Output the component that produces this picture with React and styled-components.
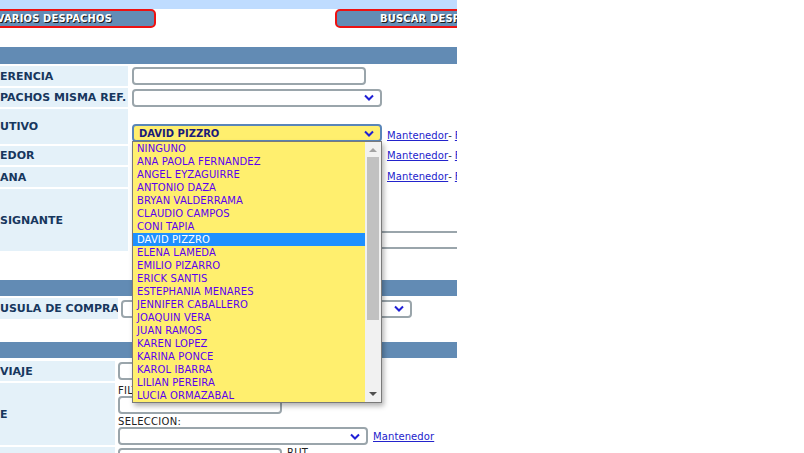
import React from "react";
import styled, { createGlobalStyle } from "styled-components";

const GlobalStyle = createGlobalStyle`
  body {
    margin: 0;
    background: #fff;
    font-family: "DejaVu Sans", Verdana, sans-serif;
  }
`;

const EJECUTIVOS = [
  "NINGUNO",
  "ANA PAOLA FERNANDEZ",
  "ANGEL EYZAGUIRRE",
  "ANTONIO DAZA",
  "BRYAN VALDERRAMA",
  "CLAUDIO CAMPOS",
  "CONI TAPIA",
  "DAVID PIZZRO",
  "ELENA LAMEDA",
  "EMILIO PIZARRO",
  "ERICK SANTIS",
  "ESTEPHANIA MENARES",
  "JENNIFER CABALLERO",
  "JOAQUIN VERA",
  "JUAN RAMOS",
  "KAREN LOPEZ",
  "KARINA PONCE",
  "KAROL IBARRA",
  "LILIAN PEREIRA",
  "LUCIA ORMAZABAL",
];

function Chevron() {
  return (
    <svg width="10" height="7" viewBox="0 0 10 7">
      <path d="M1 1.5 L5 5.5 L9 1.5" fill="none" stroke="#1f1fd6" strokeWidth="2" />
    </svg>
  );
}

function Links() {
  return (
    <LinkGroup>
      <Link href="#">Mantenedor</Link>
      <Dash>-</Dash>
      <Link href="#">Ficha</Link>
    </LinkGroup>
  );
}

function App() {
  return (
    <>
      <GlobalStyle />
      <Frame>
        <TopBand />
        <ButtonBar>
          <ActionButton $left>VARIOS DESPACHOS</ActionButton>
          <ActionButton>BUSCAR DESPACHOS</ActionButton>
        </ButtonBar>

        <SectionBar $mt={19} $h={17} />
        <Table $label={128}>
          <Label $h={20}>ERENCIA</Label>
          <Value>
            <Input $w={234} />
          </Value>

          <Label $h={19}>PACHOS MISMA REF.</Label>
          <Value>
            <SelectBox $w={250}>
              <span />
              <Chevron />
            </SelectBox>
          </Value>

          <Label $h={35}>UTIVO</Label>
          <Value $end>
            <SelectBox $w={250} $active>
              <span>DAVID PIZZRO</span>
              <Chevron />
            </SelectBox>
            <Links />
          </Value>

          <Label $h={19}>EDOR</Label>
          <Value>
            <SelectBox $w={250}>
              <span />
              <Chevron />
            </SelectBox>
            <Links />
          </Value>

          <Label $h={20}>ANA</Label>
          <Value>
            <SelectBox $w={250}>
              <span />
              <Chevron />
            </SelectBox>
            <Links />
          </Value>

          <Label $h={62}>SIGNANTE</Label>
          <Value $end>
            <Input $w={360} />
          </Value>
        </Table>

        <SectionBar $mt={29} $h={16} />
        <Table $label={118}>
          <Label $h={21}>USULA DE COMPRA</Label>
          <Value $pl={1}>
            <SelectBox $w={291}>
              <span />
              <Chevron />
            </SelectBox>
          </Value>
        </Table>

        <SectionBar $mt={23} $h={16} />
        <Table $label={115} $mt={3}>
          <Label $h={20}>VIAJE</Label>
          <Value $pl={1}>
            <Input $w={240} />
          </Value>

          <Label $h={62}>E</Label>
          <Stack>
            <Caption>FILTRO:</Caption>
            <Input $w={164} />
            <Caption $mt={3}>SELECCION:</Caption>
            <Inline>
              <SelectBox $w={250}>
                <span />
                <Chevron />
              </SelectBox>
              <Link href="#">Mantenedor</Link>
            </Inline>
          </Stack>

          <Label $h={20} />
          <Value $start $pl={1}>
            <Input $w={164} />
            <Caption>RUT</Caption>
          </Value>
        </Table>

        <DropList>
          <Options>
            {EJECUTIVOS.map((name) => (
              <Option key={name} $selected={name === "DAVID PIZZRO"}>
                {name}
              </Option>
            ))}
          </Options>
          <ScrollBar>
            <ArrowUp />
            <Track>
              <Thumb />
            </Track>
            <ArrowDown />
          </ScrollBar>
        </DropList>
      </Frame>
    </>
  );
}

const Frame = styled.div`
  position: relative;
  width: 457px;
  height: 453px;
  overflow: hidden;
  display: flex;
  flex-direction: column;
  background: #fff;
`;

const TopBand = styled.div`
  height: 9px;
  background: #bfdcff;
  flex-shrink: 0;
`;

const ButtonBar = styled.div`
  display: flex;
  gap: 179px;
  flex-shrink: 0;
  margin-left: -4px;
`;

const ActionButton = styled.div`
  box-sizing: border-box;
  flex-shrink: 0;
  height: 19px;
  width: ${(p) => (p.$left ? 160 : 200)}px;
  display: flex;
  align-items: center;
  justify-content: ${(p) => (p.$left ? "flex-end" : "flex-start")};
  padding: ${(p) => (p.$left ? "0 42px 0 0" : "0 0 0 43px")};
  background: #638cb5;
  border: 2px solid #ee1111;
  border-radius: 5px;
  color: #fff;
  font-family: "DejaVu Sans Condensed", "DejaVu Sans", sans-serif;
  font-weight: bold;
  font-size: 11px;
  letter-spacing: 0.2px;
  text-shadow: 1px 1px 0 #1a1a1a;
  white-space: nowrap;
`;

const SectionBar = styled.div`
  flex-shrink: 0;
  margin-top: ${(p) => p.$mt}px;
  height: ${(p) => p.$h}px;
  background: #628bb4;
`;

const Table = styled.div`
  display: grid;
  grid-template-columns: ${(p) => p.$label}px 1fr;
  column-gap: 2px;
  row-gap: 2px;
  margin-top: ${(p) => p.$mt || 2}px;
  flex-shrink: 0;
`;

const Label = styled.div`
  height: ${(p) => p.$h}px;
  background: #e4f1f9;
  display: flex;
  align-items: center;
  color: #17375e;
  font-weight: bold;
  font-size: 11px;
  white-space: nowrap;
  overflow: hidden;
`;

const Value = styled.div`
  display: flex;
  align-items: ${(p) => (p.$end ? "flex-end" : p.$start ? "flex-start" : "center")};
  padding-left: ${(p) => (p.$pl === undefined ? 2 : p.$pl)}px;
  padding-bottom: ${(p) => (p.$end ? 2 : 0)}px;
  padding-top: ${(p) => (p.$start ? 1 : 0)}px;
  gap: 5px;
  white-space: nowrap;
`;

const Stack = styled.div`
  display: flex;
  flex-direction: column;
  padding-left: 1px;
  padding-top: 3px;
  height: 62px;
  box-sizing: border-box;
  overflow: hidden;
`;

const Inline = styled.div`
  display: flex;
  align-items: center;
  gap: 5px;
`;

const Caption = styled.span`
  font-size: 10px;
  line-height: 10px;
  height: 10px;
  color: #222;
  letter-spacing: 0.3px;
  margin-top: ${(p) => p.$mt || 0}px;
`;

const Input = styled.div`
  box-sizing: border-box;
  flex-shrink: 0;
  width: ${(p) => p.$w}px;
  height: 18px;
  border: 2px solid #9aa5ab;
  border-radius: 4px;
  background: #fff;
`;

const SelectBox = styled.div`
  box-sizing: border-box;
  flex-shrink: 0;
  width: ${(p) => p.$w}px;
  height: 18px;
  display: flex;
  align-items: center;
  justify-content: space-between;
  padding: 0 6px 0 5px;
  border: 2px solid ${(p) => (p.$active ? "#5a86b8" : "#9aa5ab")};
  border-radius: 4px;
  background: ${(p) => (p.$active ? "#ffef6e" : "#fff")};
  color: #1a1a7a;
  font-size: 10px;
  font-weight: bold;
`;

const LinkGroup = styled.span`
  display: inline-flex;
  align-items: baseline;
  margin-bottom: 1px;
`;

const Link = styled.a`
  color: #2323cc;
  text-decoration: underline;
  font-size: 10px;
  letter-spacing: 0.1px;
`;

const Dash = styled.span`
  color: #333;
  font-size: 10px;
  margin-right: 3px;
`;

const DropList = styled.div`
  position: absolute;
  left: 132px;
  top: 141px;
  width: 250px;
  height: 262px;
  box-sizing: border-box;
  border: 1px solid #7a7a7a;
  background: #ffef6e;
  box-shadow: 2px 3px 5px rgba(0, 0, 0, 0.3);
  display: flex;
`;

const Options = styled.div`
  flex: 1;
  display: flex;
  flex-direction: column;
`;

const Option = styled.div`
  height: 13px;
  line-height: 13px;
  padding-left: 4px;
  font-size: 10px;
  letter-spacing: 0.1px;
  color: ${(p) => (p.$selected ? "#fff" : "#5a00f0")};
  background: ${(p) => (p.$selected ? "#1e90ff" : "transparent")};
  white-space: nowrap;
`;

const ScrollBar = styled.div`
  width: 16px;
  background: #f1f1f1;
  display: flex;
  flex-direction: column;
  align-items: center;
`;

const ArrowUp = styled.div`
  width: 0;
  height: 0;
  margin: 6px 0 5px;
  border-left: 4px solid transparent;
  border-right: 4px solid transparent;
  border-bottom: 4px solid #a3a3a3;
`;

const ArrowDown = styled.div`
  width: 0;
  height: 0;
  margin: 5px 0 6px;
  border-left: 4px solid transparent;
  border-right: 4px solid transparent;
  border-top: 4px solid #505050;
`;

const Track = styled.div`
  flex: 1;
  width: 100%;
  display: flex;
  justify-content: center;
`;

const Thumb = styled.div`
  width: 12px;
  height: 163px;
  background: #c1c1c1;
`;

export default App;
